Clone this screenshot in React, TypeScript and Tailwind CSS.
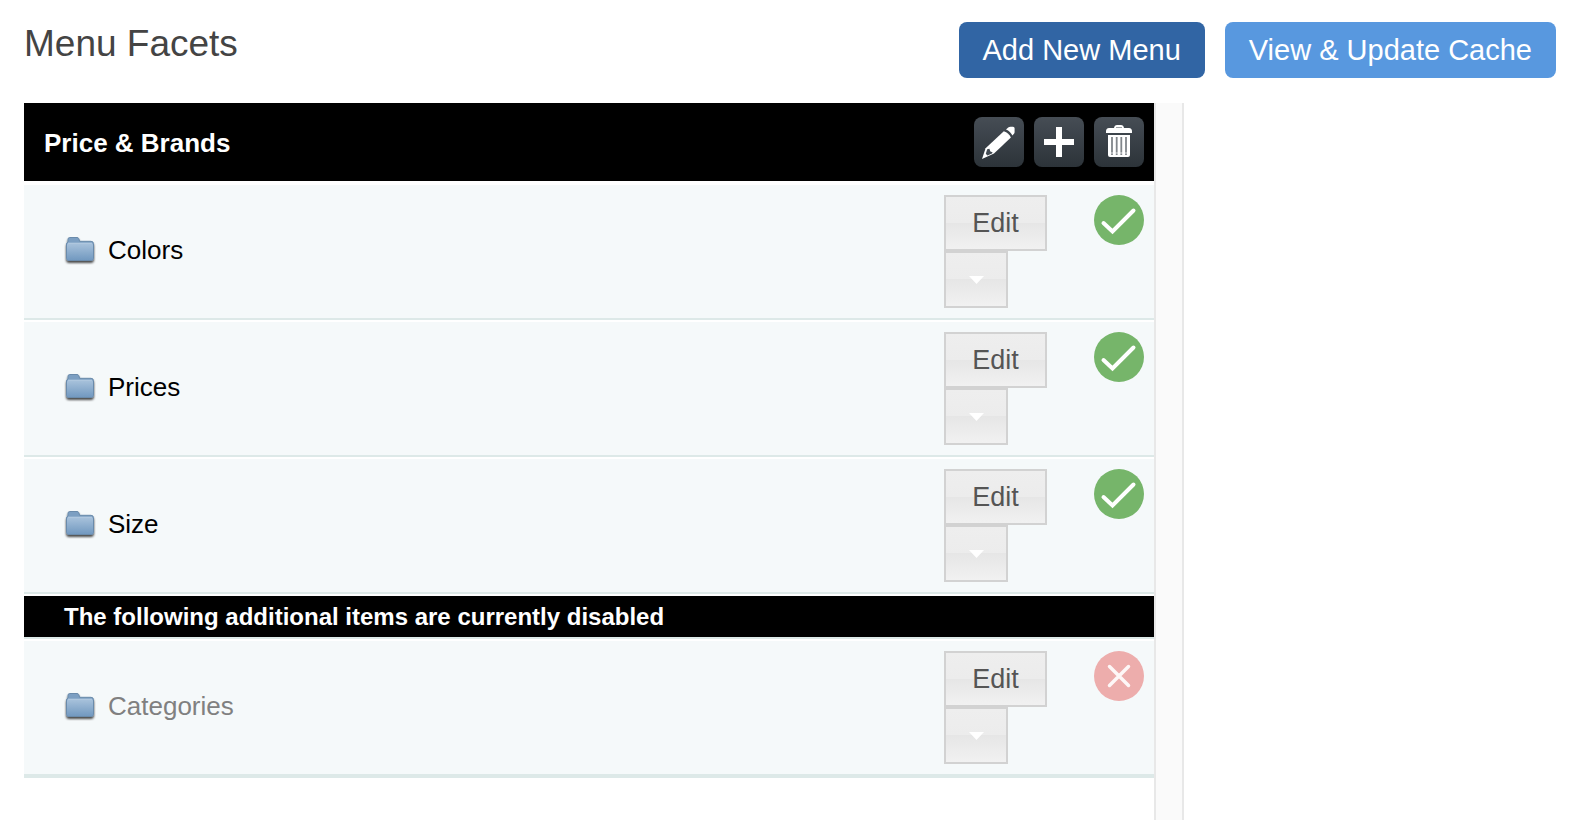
import { useState } from 'react';

interface Facet {
  id: number;
  name: string;
  enabled: boolean;
}

const initialFacets: Facet[] = [
  { id: 1, name: 'Colors', enabled: true },
  { id: 2, name: 'Prices', enabled: true },
  { id: 3, name: 'Size', enabled: true },
  { id: 4, name: 'Categories', enabled: false },
];

function FolderIcon() {
  return (
    <svg width="32" height="32" viewBox="0 0 32 32" aria-hidden="true">
      <defs>
        <linearGradient id="folder-front" x1="0" y1="0" x2="0" y2="1">
          <stop offset="0" stopColor="#a9c3dc" />
          <stop offset="1" stopColor="#7299c0" />
        </linearGradient>
        <filter id="folder-shadow" x="-20%" y="-20%" width="140%" height="150%">
          <feDropShadow dx="0" dy="2" stdDeviation="1" floodColor="#000" floodOpacity="0.7" />
        </filter>
      </defs>
      <g filter="url(#folder-shadow)">
        <path
          d="M4 8V5.2Q4 3.5 5.8 3.5H13Q14.4 3.5 14.9 4.8L15.6 7.3H27Q29.5 7.3 29.5 9.7V24.3Q29.5 26.5 27.3 26.5H4.7Q2.5 26.5 2.5 24.3V10Q2.5 8.6 4 8Z"
          fill="#7b9fc2"
          stroke="#6b8bab"
        />
        <rect x="3" y="9" width="26" height="17" rx="2" fill="url(#folder-front)" />
        <path d="M4 9.2H28" stroke="#b3cadf" strokeWidth="1" />
      </g>
    </svg>
  );
}

function PencilIcon() {
  return (
    <svg width="50" height="50" viewBox="0 0 50 50" aria-hidden="true">
      <path d="M32 12.4L34.2 10.5Q35.2 9.7 36.5 9.7H39Q40.6 9.7 40.6 11.3V15Q40.6 16 40 16.8L38.4 18.6Q36.5 14.2 32 12.4Z" fill="#fff" />
      <path d="M29.8 14.2Q35 15.8 36.9 20.6L20 36.6L8 42L11.6 31.2Z" fill="#fff" />
      <path d="M13.2 32.2L15.4 31.8L16.4 34.4L18.6 35.2L18 36.6L13.4 38.4L11.8 36.8Z" fill="#434b53" />
    </svg>
  );
}

function PlusIcon() {
  return (
    <svg width="50" height="50" viewBox="0 0 50 50" aria-hidden="true">
      <path d="M22 10h6v12h12v6H28v12h-6V28H10v-6h12Z" fill="#fff" />
    </svg>
  );
}

function TrashIcon() {
  return (
    <svg width="50" height="50" viewBox="0 0 50 50" aria-hidden="true">
      <path d="M12 16V14.5Q12 11 15 11H20Q20.5 8 23 8H27Q29.5 8 30 11H35Q38 11 38 14.5V16Z" fill="#fff" />
      <path d="M22 10.5H28" stroke="#9a9fa3" strokeWidth="1" />
      <path d="M14 18H36V38Q36 40 34 40H16Q14 40 14 38Z" fill="#fff" />
      <path d="M18 20V38M22.7 20V38M27.3 20V38M32 20V38" stroke="#81868b" strokeWidth="1.8" />
      <path d="M17 36H33" stroke="#fff" strokeOpacity="0.5" strokeWidth="1.5" />
    </svg>
  );
}

function StatusIcon({ enabled }: { enabled: boolean }) {
  return (
    <svg width="50" height="50" viewBox="0 0 50 50" aria-hidden="true">
      <circle cx="25" cy="25" r="25" fill={enabled ? '#76b56a' : '#edadac'} />
      {enabled ? (
        <path d="M9.5 28L18.5 36.5L39.5 15.5" fill="none" stroke="#fff" strokeWidth="4" strokeLinecap="round" />
      ) : (
        <path d="M15.5 15.5L34.5 34.5M34.5 15.5L15.5 34.5" stroke="#fff" strokeOpacity="0.9" strokeWidth="3.5" strokeLinecap="round" />
      )}
    </svg>
  );
}

const toolButton = 'size-[50px] rounded-lg bg-linear-to-b from-[#464d55] to-[#2c3339] cursor-pointer';
const grayButton =
  'flex items-center justify-center border-2 border-[#d2d2d2] bg-[linear-gradient(#eeeeee,#ececec_50%,#e6e6e6_50%,#f1f1f1)] cursor-pointer';

interface FacetRowProps {
  facet: Facet;
  onToggle: (id: number) => void;
}

function FacetRow({ facet, onToggle }: FacetRowProps) {
  return (
    <li className="flex items-start border-y-2 border-t-white border-b-[#dde9e8] bg-[#f5f9fa] p-[10px]">
      <div className="flex flex-1 items-center gap-3 self-center pb-1 pl-[30px]">
        <FolderIcon />
        <span className={facet.enabled ? 'text-[26px] leading-8 text-black' : 'text-[26px] leading-8 text-[#808080]'}>
          {facet.name}
        </span>
      </div>
      <div className="w-[150px]">
        <button className={`${grayButton} h-14 w-[103px] text-[27px] text-[#555]`}>Edit</button>
        <button aria-label={`More actions for ${facet.name}`} className={`${grayButton} h-[57px] w-16`}>
          <svg width="16" height="8" viewBox="0 0 16 8" aria-hidden="true">
            <path d="M1 0H16L8.5 8Z" fill="#fff" />
          </svg>
        </button>
      </div>
      <button
        aria-label={facet.enabled ? `Disable ${facet.name}` : `Enable ${facet.name}`}
        onClick={() => onToggle(facet.id)}
        className="cursor-pointer"
      >
        <StatusIcon enabled={facet.enabled} />
      </button>
    </li>
  );
}

export default function App() {
  const [facets, setFacets] = useState<Facet[]>(initialFacets);

  const handleToggle = (id: number) => {
    setFacets((prev) => prev.map((f) => (f.id === id ? { ...f, enabled: !f.enabled } : f)));
  };

  const enabledFacets = facets.filter((f) => f.enabled);
  const disabledFacets = facets.filter((f) => !f.enabled);

  return (
    <div className="flex min-h-screen flex-col bg-white pl-6 font-['Liberation_Sans',Arial,sans-serif]">
      {/* Page header */}
      <header className="flex items-start justify-between pt-[22px] pr-5 pb-[25px]">
        <h1 className="text-[37px] leading-11 text-[#444]">Menu Facets</h1>
        <div className="flex gap-5">
          <button className="h-14 cursor-pointer rounded-lg bg-[#3165a4] px-6 pt-0.5 text-[29px] text-white">
            Add New Menu
          </button>
          <button className="h-14 cursor-pointer rounded-lg bg-[#5898df] px-6 pt-0.5 text-[29px] text-white">
            View &amp; Update Cache
          </button>
        </div>
      </header>

      <div className="flex flex-1">
        {/* Facet list */}
        <main className="flex-1">
          <div className="mb-0.5 flex items-center bg-black py-[14px] pr-[10px] pl-5">
            <h2 className="flex-1 pt-0.5 text-[26px] leading-8 font-bold text-white">Price &amp; Brands</h2>
            <div className="flex gap-[10px]">
              <button aria-label="Edit menu" className={toolButton}>
                <PencilIcon />
              </button>
              <button aria-label="Add facet" className={toolButton}>
                <PlusIcon />
              </button>
              <button aria-label="Delete menu" className={toolButton}>
                <TrashIcon />
              </button>
            </div>
          </div>

          <ul>
            {enabledFacets.map((facet) => (
              <FacetRow key={facet.id} facet={facet} onToggle={handleToggle} />
            ))}
          </ul>

          {disabledFacets.length > 0 && (
            <>
              <h3 className="border-y-2 border-t-white border-b-[#dde9e8] bg-black pl-10 text-2xl leading-[41px] font-bold text-white">
                The following additional items are currently disabled
              </h3>
              <ul className="border-b-2 border-[#dde9e8]">
                {disabledFacets.map((facet) => (
                  <FacetRow key={facet.id} facet={facet} onToggle={handleToggle} />
                ))}
              </ul>
            </>
          )}
        </main>

        {/* Resize gutter */}
        <div className="w-[30px] border-x-2 border-[#e8e8e8] bg-[#fafafa]" />
        <aside className="w-[392px]" />
      </div>
    </div>
  );
}
